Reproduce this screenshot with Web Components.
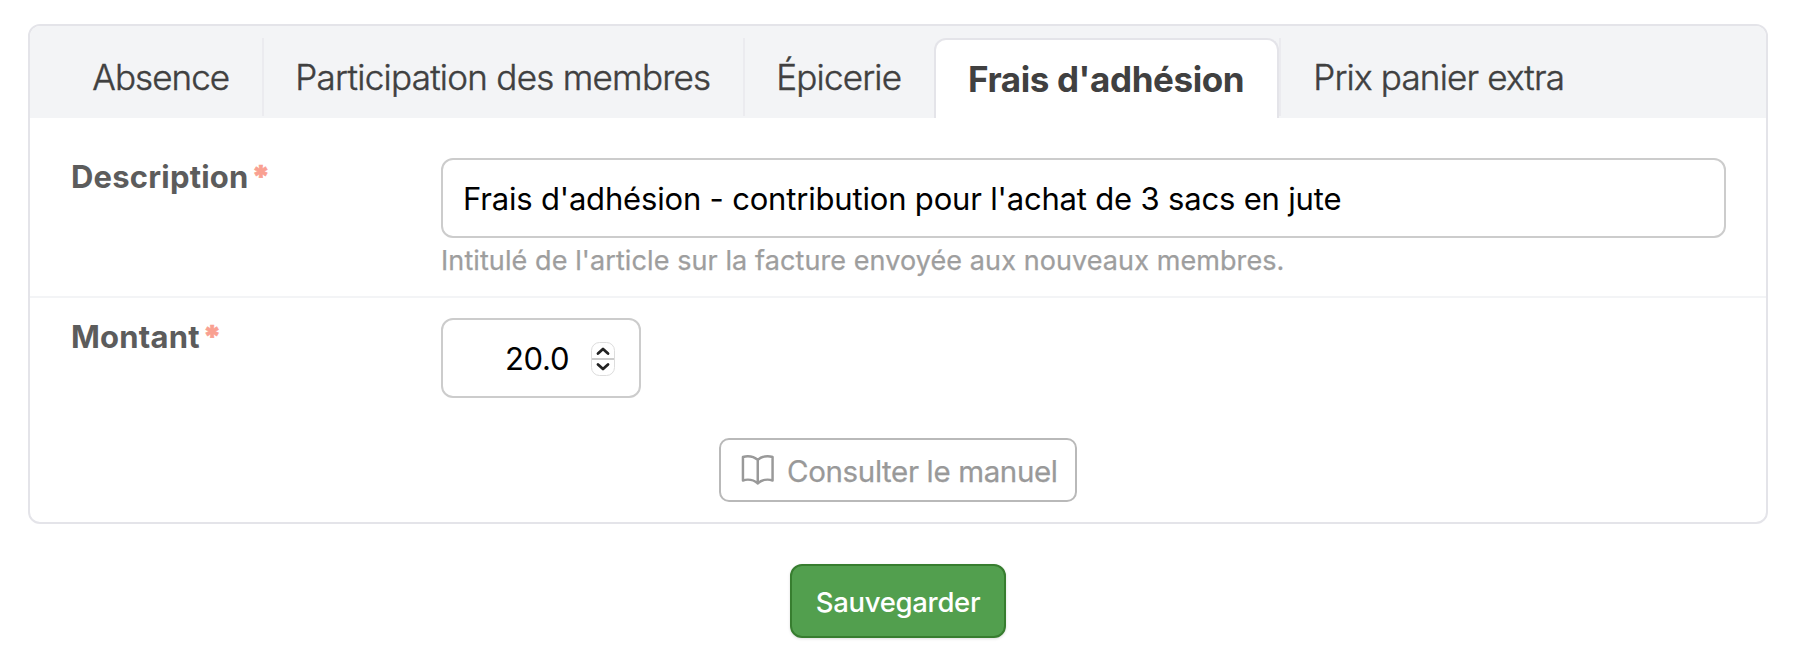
<!DOCTYPE html>
<html lang="fr"><head><meta charset="utf-8"><title>Facturation</title>
<style>
body{margin:0;background:#fff;font-family:Inter,"Liberation Sans",sans-serif;width:1800px;height:664px;overflow:hidden}
main{padding:24px 32px 0 28px;display:flex;flex-direction:column;align-items:center}
settings-panel{align-self:stretch}
save-button{margin:40px 0 0 0}
</style></head><body>
<main>
<settings-panel>
<tab-item slot="tabs" style="width:202px;letter-spacing:-.93px">Absence</tab-item>
<tab-item slot="tabs" style="width:479px;letter-spacing:-.72px;--inset:31.3px">Participation des membres</tab-item>
<tab-item slot="tabs" class="plain" style="width:189px;letter-spacing:-.8px;--inset:31.3px">Épicerie</tab-item>
<tab-item slot="tabs" active style="width:345px;letter-spacing:-.4px">Frais d'adhésion</tab-item>
<tab-item slot="tabs" first style="width:320px;letter-spacing:-.8px">Prix panier extra</tab-item>
<form-row label="Description" line><text-field>Frais d'adhésion - contribution pour l'achat de 3 sacs en jute</text-field><field-hint>Intitulé de l'article sur la facture envoyée aux nouveaux membres.</field-hint></form-row>
<form-row label="Montant"><number-field>20.0</number-field></form-row>
<manual-link>Consulter le manuel</manual-link>
</settings-panel>
<save-button>Sauvegarder</save-button>
</main>
<script>
const define=(name,html)=>customElements.define(name,class extends HTMLElement{
connectedCallback(){if(this.shadowRoot)return;const r=this.attachShadow({mode:'open'});r.innerHTML=html;
const l=r.querySelector('.label');if(l)l.textContent=this.getAttribute('label');}});
define('settings-panel',`<style>:host{display:block;box-sizing:border-box;height:500px;border:2px solid #e4e4e9;border-radius:12px;overflow:hidden}
header{display:flex;height:80px;padding:12px 0 0 30px;background:#f3f4f6}
.body{display:flex;flex-direction:column}</style><header><slot name="tabs"></slot></header><div class="body"><slot></slot></div>`);
define('tab-item',`<style>:host{display:block;box-sizing:content-box;height:78px;line-height:79px;font-size:35px;font-weight:300;-webkit-text-stroke:.45px #404040;color:#404040;white-space:nowrap;border-right:2px solid #ebebef;flex:none}
span{display:block;padding-left:var(--inset,32.3px)}
:host(.plain){border:0}
:host([first]){border-right:0;border-left:2px solid #ebebef}
:host([active]){box-sizing:border-box;height:80px;line-height:79px;border:2px solid #e4e4e9;border-bottom:0;border-radius:12px 12px 0 0;background:#fff;font-weight:700;-webkit-text-stroke:0}
:host([active]) span{padding-left:32px}</style><span><slot></slot></span>`);
define('form-row',`<style>:host{display:grid;grid-template-columns:371px 1285px;padding:0 40px;height:138px;padding-top:40px;box-sizing:content-box}
:host([line]){border-bottom:2px solid #f3f4f6}
:host(:not([line])){padding-top:20px;height:80px}
.l{display:flex;font-weight:700;font-size:31px;line-height:38px;color:#5c5c5c;letter-spacing:.2px;padding-left:1px}
b{color:#f9a091;margin-left:3px;-webkit-text-stroke:.6px #f9a091}
.c{display:flex;flex-direction:column}</style><div class="l"><span class="label"></span><b>*</b></div><div class="c"><slot></slot></div>`);
define('text-field',`<style>:host{display:block;box-sizing:border-box;height:80px;border:2px solid #ccc;border-radius:12px;padding-left:20px;font-size:31px;line-height:78px;letter-spacing:-.18px;color:#000;white-space:nowrap}</style><slot></slot>`);
define('field-hint',`<style>:host{display:block;font-size:27px;line-height:45px;letter-spacing:.09px;color:#9e9e9e;-webkit-text-stroke:.25px #9e9e9e;white-space:nowrap}</style><slot></slot>`);
define('number-field',`<style>:host{display:flex;box-sizing:border-box;width:200px;height:80px;border:2px solid #ccc;border-radius:12px;padding-left:62px;font-size:31px;line-height:78px;letter-spacing:-.3px;align-items:center}
.v{width:83px;padding-top:1px}svg{flex:none;margin-top:2px}</style><span class="v"><slot></slot></span><svg width="30" height="40" viewBox="0 0 30 40"><rect x="3.5" y="3.5" width="23" height="33" rx="8" fill="#fff" stroke="#ddd"/><path d="M4 20h22" stroke="#ccc" stroke-width="2"/><path d="M10 14.5l5-4.5 5 4.5M10 25.5l5 4.5 5-4.5" fill="none" stroke="#222" stroke-width="2.8" stroke-linecap="round" stroke-linejoin="round"/></svg>`);
define('manual-link',`<style>:host{display:flex;box-sizing:border-box;align-self:center;width:358px;height:64px;margin-top:40px;border:2px solid #b9b9b9;border-radius:10px;padding-left:17px;align-items:center;font-size:29.5px;letter-spacing:-.36px;-webkit-text-stroke:.25px #999;line-height:64px;color:#999;white-space:nowrap}
span{padding-top:1.5px}svg{margin-right:9.5px;flex:none}</style><svg width="39.5" height="39.5" viewBox="0 0 24 24" fill="none" stroke="#999" stroke-width="1.5" stroke-linecap="round" stroke-linejoin="round"><path d="M12 6.042A8.967 8.967 0 0 0 6 3.75c-1.052 0-2.062.18-3 .512v14.25A8.987 8.987 0 0 1 6 18c2.305 0 4.408.867 6 2.292m0-14.25a8.966 8.966 0 0 1 6-2.292c1.052 0 2.062.18 3 .512v14.25A8.987 8.987 0 0 0 18 18a8.967 8.967 0 0 0-6 2.292m0-14.25v14.25"/></svg><span><slot></slot></span>`);
define('save-button',`<style>:host{display:block;box-sizing:border-box;width:216px;height:74px;border:2px solid #377d2f;border-radius:12px;background:#529f4e;color:#fff;font-size:27.5px;font-weight:500;letter-spacing:-.3px;line-height:72px;text-align:center;box-shadow:0 1px 3px #0002}</style><slot></slot>`);
</script></body></html>
